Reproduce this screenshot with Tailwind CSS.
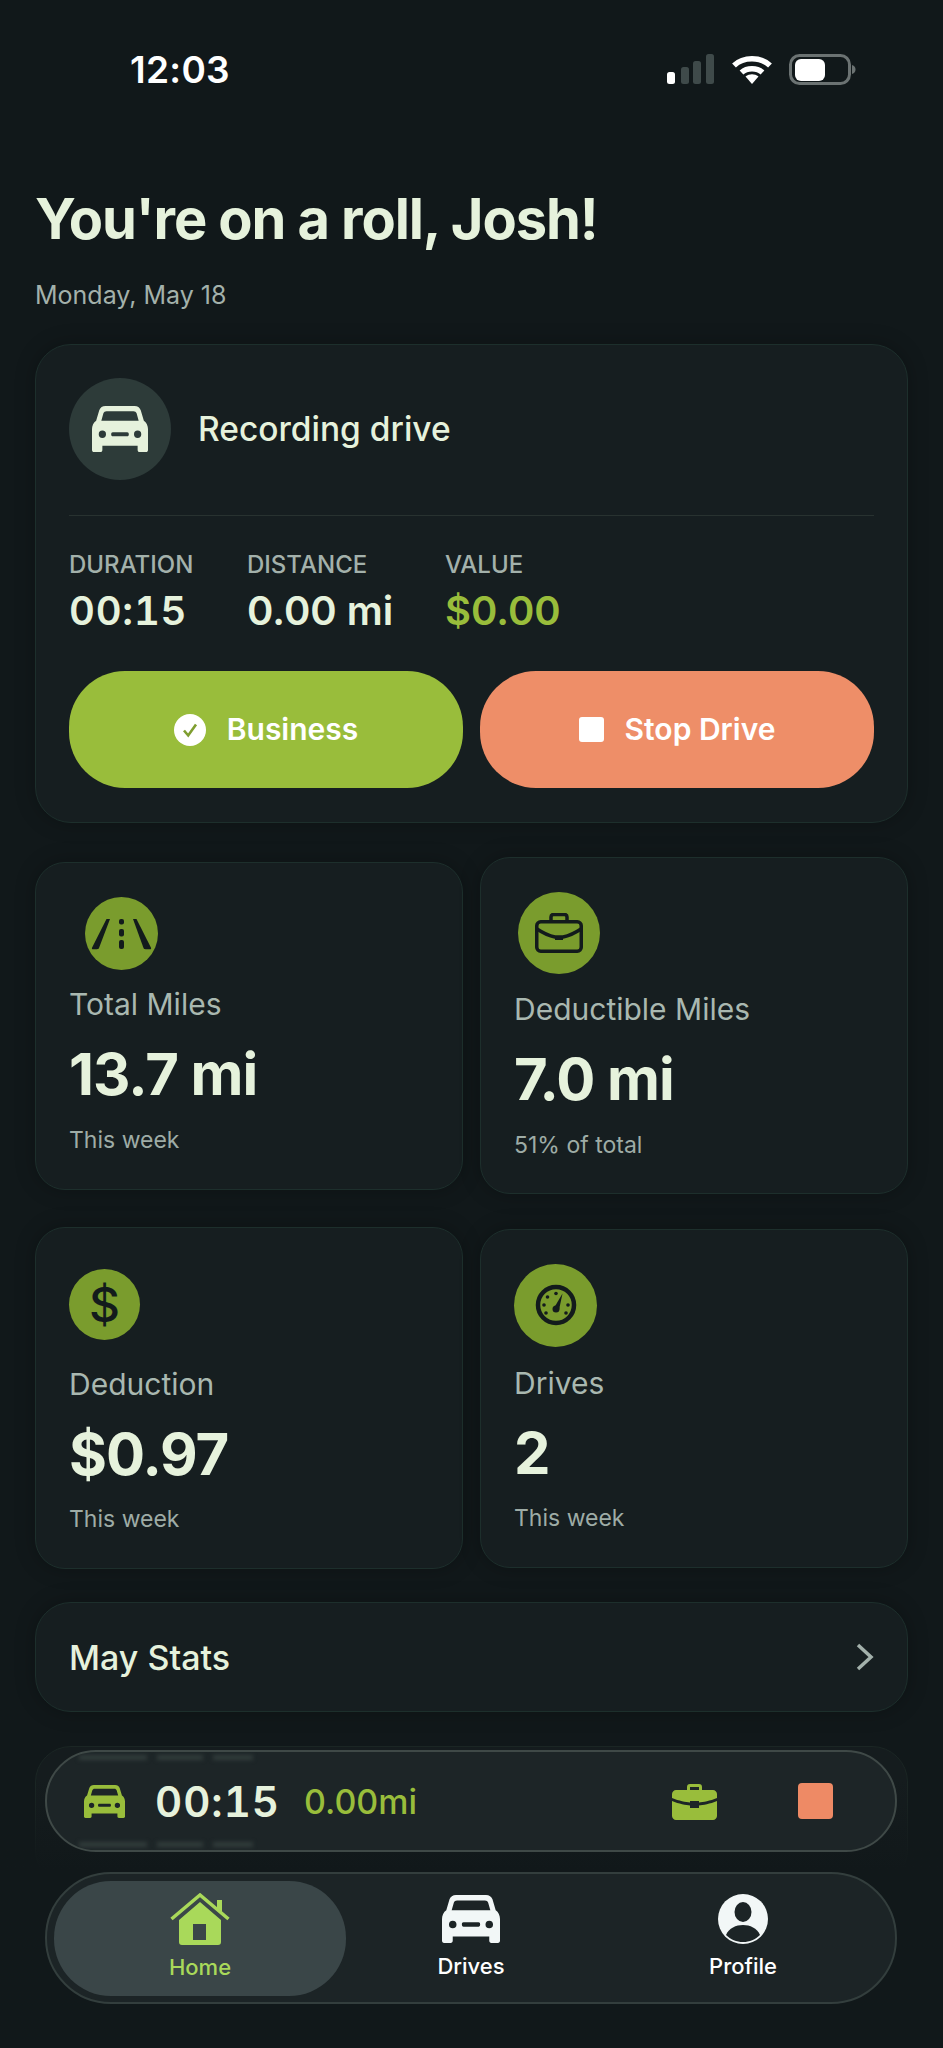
<!DOCTYPE html>
<html lang="en">
<head>
  <meta charset="UTF-8">
  <meta name="viewport" content="width=device-width, initial-scale=1.0">
  <title>Home - Mileage Tracker</title>
  <script src="https://cdn.jsdelivr.net/npm/@tailwindcss/browser@4"></script>
</head>
<body class="bg-[#11181a] font-[Inter,sans-serif] text-[#e6f2dc]">
<div class="relative w-[943px] h-[2048px] overflow-hidden">

  <!-- Status bar -->
  <div class="flex items-center h-[31px] mt-[54px] pl-[130px] pr-[87px] justify-between">
    <span class="text-[37px] leading-none font-semibold text-white tracking-[0.3px]">12:03</span>
    <div class="flex items-center gap-[16px]">
      <svg width="48" height="31" viewBox="0 0 48 31"><rect x="0" y="18" width="8" height="12" rx="2.5" fill="#fff"/><rect x="14" y="13" width="8" height="17" rx="2.5" fill="#3f4a4a"/><rect x="26" y="7" width="8" height="23" rx="2.5" fill="#3f4a4a"/><rect x="39" y="0" width="8" height="30" rx="2.5" fill="#3f4a4a"/></svg>
      <svg width="42" height="31" viewBox="0 0 42 31"><path d="M3 11.5C12.5 2.5 29.5 2.5 39 11.5" fill="none" stroke="#fff" stroke-width="5.5"/><path d="M10.5 18.5C16 13.5 26 13.5 31.5 18.5" fill="none" stroke="#fff" stroke-width="5.5"/><path d="M14.5 22.5 21 30l6.5-7.5C23.5 19.5 18.5 19.5 14.5 22.5Z" fill="#fff"/></svg>
      <svg width="67" height="31" viewBox="0 0 67 31"><rect x="1.5" y="1.5" width="59" height="28" rx="9" fill="none" stroke="#6b7272" stroke-width="3"/><rect x="6" y="5" width="30" height="22" rx="6" fill="#fff"/><path d="M63 11c2.5.5 3.5 2.5 3.5 4.5S65.500 19.500 63 20Z" fill="#6b7272"/></svg>
    </div>
  </div>

  <main class="px-[35px]">
    <h1 class="mt-[100px] text-[56px] leading-[68px] font-bold tracking-[-1.1px]">You're on a roll, Josh!</h1>
    <p class="mt-[27px] text-[25px] leading-[30px] text-[#a3b1ab]">Monday, May 18</p>

    <div class="flex flex-col gap-[34px] mt-[34px]">
      <!-- Active drive -->
      <section class="h-[479px] rounded-[36px] border border-[#1d2f2c] bg-[#161e20] shadow-[0_0_20px_rgba(0,0,0,0.25)] px-[33px] pt-[33px]">
        <div class="flex items-center gap-[27px] pb-[35px] border-b border-[#283230]">
          <div class="flex items-center justify-center w-[102px] h-[102px] rounded-full bg-[#2d3b39]">
            <svg class="w-[56px] h-[46px]" viewBox="0 0 54 44" preserveAspectRatio="none" fill="#e6f2dc"><path fill-rule="evenodd" d="M13 0H41c3 0 5 1.500 6 4L50 14c2.500 1.500 4 5 4 8V42c0 1-.7 2-2 2H46c-1.300 0-2-1-2-2V38H10V42c0 1-.7 2-2 2H2c-1.300 0-2-1-2-2V22c0-3 1.500-6.500 4-8L7 4C8 1.500 10 0 13 0ZM14 5c-1.500 0-2.500.8-3 2L9 14H45L43 7c-.5-1.200-1.500-2-3-2ZM10 23.500a3.500 3.500 0 1 0 0 7 3.500 3.500 0 0 0 0-7ZM44 23.500a3.500 3.500 0 1 0 0 7 3.500 3.500 0 0 0 0-7ZM20 25c-1 0-1.500.7-1.500 2s.5 2 1.500 2H34c1 0 1.500-.7 1.500-2s-.5-2-1.500-2Z"/></svg>
          </div>
          <span class="text-[33.5px] font-medium">Recording drive</span>
        </div>
        <div class="flex mt-[34px]">
          <div class="w-[178px]">
            <div class="text-[24px] leading-[30px] font-medium text-[#a3b1ab]">DURATION</div>
            <div class="text-[40px] leading-[48px] mt-[7px] font-semibold tabular-nums tracking-[0.8px]">00:15</div>
          </div>
          <div class="w-[198px]">
            <div class="text-[24px] leading-[30px] font-medium text-[#a3b1ab]">DISTANCE</div>
            <div class="text-[40px] leading-[48px] mt-[7px] font-semibold">0.00 mi</div>
          </div>
          <div>
            <div class="text-[24px] leading-[30px] font-medium text-[#a3b1ab]">VALUE</div>
            <div class="text-[40px] leading-[48px] mt-[7px] font-semibold text-[#99bd3b]">$0.00</div>
          </div>
        </div>
        <div class="flex gap-[17px] mt-[36px]">
          <div class="flex-1 h-[117px] rounded-[56px] bg-[#99bd3b] flex items-center justify-center gap-[21px] text-[30px] font-semibold text-white">
            <svg class="w-[32px] h-[32px]" viewBox="0 0 32 32"><circle cx="16" cy="16" r="16" fill="#fff"/><path d="M10 16.500l4.200 5L22 10.500" fill="none" stroke="#7f9e30" stroke-width="2.600"/></svg>
            Business
          </div>
          <div class="flex-1 h-[117px] rounded-[56px] bg-[#ee8e68] flex items-center justify-center gap-[21px] text-[30px] font-semibold text-white">
            <span class="w-[25px] h-[25px] rounded-[3px] bg-white"></span>
            Stop Drive
          </div>
        </div>
      </section>

      <!-- Week stats -->
      <div class="grid grid-cols-2 gap-x-[17px] items-center">
        <section class="h-[328px] rounded-[30px] border border-[#1d2f2c] bg-[#161e20] shadow-[0_0_20px_rgba(0,0,0,0.25)] pl-[33px] pt-[34px]">
          <svg class="ml-[16px] w-[73px] h-[73px]" viewBox="0 0 73 73"><circle cx="36.500" cy="36.500" r="36.500" fill="#7a9c2d"/><g fill="#131b1c"><path d="M21.500 22h3.500L14 51c-.3.8-1 1.200-2 1.200H8c-1 0-1.300-.7-1-1.500Z"/><path d="M48 22h3.500L66 50.700c.3.8 0 1.500-1 1.500h-4.500c-1 0-1.700-.4-2-1.200Z"/><rect x="34" y="22" width="5" height="5.500" rx="2"/><rect x="34" y="32" width="5" height="7.500" rx="2"/><rect x="34" y="43" width="5" height="9" rx="2"/></g></svg>
          <div class="mt-[16px] text-[30px] leading-[36px] text-[#a9b8b0]">Total Miles</div>
          <div class="mt-[18px] text-[58px] leading-[68px] font-bold tracking-[-1px]">13.7 mi</div>
          <div class="mt-[18px] text-[23px] leading-[28px] text-[#9eaca6]">This week</div>
        </section>
        <section class="h-[337px] rounded-[30px] border border-[#1d2f2c] bg-[#161e20] shadow-[0_0_20px_rgba(0,0,0,0.25)] pl-[33px] pt-[34px]">
          <div class="ml-[4px] flex items-center justify-center w-[82px] h-[82px] rounded-full bg-[#7a9c2d]">
            <svg class="w-[48px] h-[40px]" viewBox="0 0 48 40" fill="none" stroke="#131b1c" stroke-width="3.500"><rect x="1.750" y="8.750" width="44.500" height="29.500" rx="4"/><path d="M16 8V4c0-1.700 1-2.500 2.500-2.500h11C31 1.500 32 2.300 32 4V8"/><path d="M2 16c6 4 13 7 18 8h8c5-1 12-4 18-8"/><rect x="20" y="23" width="8" height="4" fill="#131b1c" stroke="none"/></svg>
          </div>
          <div class="mt-[17px] text-[30px] leading-[36px] text-[#a9b8b0]">Deductible Miles</div>
          <div class="mt-[18px] text-[58px] leading-[68px] font-bold tracking-[-1px]">7.0 mi</div>
          <div class="mt-[18px] text-[23px] leading-[28px] text-[#9eaca6]">51% of total</div>
        </section>
      </div>

      <div class="grid grid-cols-2 gap-x-[17px] items-center -mt-[1px]">
        <section class="h-[342px] rounded-[30px] border border-[#1d2f2c] bg-[#161e20] shadow-[0_0_20px_rgba(0,0,0,0.25)] pl-[33px] pt-[41px]">
          <div class="flex items-center justify-center w-[71px] h-[71px] rounded-full bg-[#7a9c2d] text-[48px] font-medium leading-none text-[#131b1c]">$</div>
          <div class="mt-[26px] text-[30px] leading-[36px] text-[#a9b8b0]">Deduction</div>
          <div class="mt-[18px] text-[58px] leading-[68px] font-bold tracking-[-1px]">$0.97</div>
          <div class="mt-[17px] text-[23px] leading-[28px] text-[#9eaca6]">This week</div>
        </section>
        <section class="h-[339px] rounded-[30px] border border-[#1d2f2c] bg-[#161e20] shadow-[0_0_20px_rgba(0,0,0,0.25)] pl-[33px] pt-[34px]">
          <div class="flex items-center justify-center w-[83px] h-[83px] rounded-full bg-[#7a9c2d]">
            <svg class="w-[42px] h-[42px]" viewBox="0 0 42 42"><circle cx="21" cy="21" r="18" fill="none" stroke="#131b1c" stroke-width="4.500"/><path d="M19 24 27.500 9.500 24 26Z" fill="#131b1c"/><circle cx="21" cy="25" r="3.500" fill="#131b1c"/><g fill="#131b1c"><circle cx="21" cy="9.500" r="1.800"/><circle cx="12.500" cy="13" r="1.800"/><circle cx="9" cy="21" r="1.800"/><circle cx="11" cy="29" r="1.800"/><circle cx="31" cy="29" r="1.800"/><circle cx="33" cy="21" r="1.800"/></g></svg>
          </div>
          <div class="mt-[18px] text-[30px] leading-[36px] text-[#a9b8b0]">Drives</div>
          <div class="mt-[18px] text-[58px] leading-[68px] font-bold">2</div>
          <div class="mt-[17px] text-[23px] leading-[28px] text-[#9eaca6]">This week</div>
        </section>
      </div>

      <!-- Monthly stats link -->
      <section class="-mt-[1px] h-[110px] rounded-[36px] border border-[#1d2f2c] bg-[#161e20] shadow-[0_0_20px_rgba(0,0,0,0.25)] px-[33px] flex items-center justify-between">
        <span class="text-[34px] font-medium">May Stats</span>
        <svg class="w-[18px] h-[28px]" viewBox="0 0 18 28" fill="none" stroke="#a3b1ab" stroke-width="3.500"><path d="M2 2l13 12L2 26"/></svg>
      </section>

      <!-- Card scrolled under the floating bars -->
      <section class="h-[140px] rounded-[36px] border border-[#1b2624] bg-[#151c1e]"></section>
    </div>
  </main>

  <!-- Fade behind the tab bar -->
  <div class="absolute left-0 top-[1780px] w-full h-[90px] bg-gradient-to-b from-[#11181a]/0 to-[#11181a]"></div>
  <div class="absolute left-0 top-[1870px] w-full h-[178px] bg-[#11181a]"></div>

  <!-- Floating recorder and tab bar -->
  <div class="absolute left-[45px] top-[1750px] w-[852px] flex flex-col gap-[20px]">
    <div class="relative overflow-hidden h-[102px] rounded-[51px] border-2 border-[#3f4947] bg-[#1d2527] flex items-center pl-[37px] pr-[62px]">
      <!-- smeared reflection of the card underneath -->
      <div class="absolute left-[32px] top-[3px] flex gap-[10px] blur-[2px]">
        <span class="w-[68px] h-[5px] bg-[#323d3c]"></span><span class="w-[46px] h-[5px] bg-[#323d3c]"></span><span class="w-[40px] h-[5px] bg-[#323d3c]"></span>
      </div>
      <div class="absolute left-[32px] bottom-[3px] flex gap-[10px] blur-[2px]">
        <span class="w-[68px] h-[5px] bg-[#323d3c]"></span><span class="w-[46px] h-[5px] bg-[#323d3c]"></span><span class="w-[40px] h-[5px] bg-[#323d3c]"></span>
      </div>
      <svg class="w-[41px] h-[33px]" viewBox="0 0 54 44" preserveAspectRatio="none" fill="#99bd3b"><path fill-rule="evenodd" d="M13 0H41c3 0 5 1.500 6 4L50 14c2.500 1.500 4 5 4 8V42c0 1-.7 2-2 2H46c-1.300 0-2-1-2-2V38H10V42c0 1-.7 2-2 2H2c-1.300 0-2-1-2-2V22c0-3 1.500-6.500 4-8L7 4C8 1.500 10 0 13 0ZM14 5c-1.500 0-2.500.8-3 2L9 14H45L43 7c-.5-1.200-1.500-2-3-2ZM10 23.500a3.500 3.500 0 1 0 0 7 3.500 3.500 0 0 0 0-7ZM44 23.500a3.500 3.500 0 1 0 0 7 3.500 3.500 0 0 0 0-7ZM20 25c-1 0-1.500.7-1.500 2s.5 2 1.500 2H34c1 0 1.500-.7 1.500-2s-.5-2-1.500-2Z"/></svg>
      <span class="ml-[30px] text-[42px] font-semibold tabular-nums tracking-[1px]">00:15</span>
      <span class="ml-[24px] text-[34px] font-medium text-[#99bd3b]">0.00mi</span>
      <svg class="ml-auto w-[45px] h-[37px]" viewBox="0 0 45 37"><path d="M15 8V4c0-2 1-3 3-3h9c2 0 3 1 3 3v4h-3V4h-9v4Z" fill="#99bd3b"/><path d="M4 7h37c2 0 4 2 4 4v4c-7 3-14 4-18 4.500V18h-9v1.500C14 19 7 18 0 15v-4c0-2 2-4 4-4Z" fill="#99bd3b"/><path d="M0 18c7 3 14 4 18 4.500V25h9v-2.500c4-.5 11-1.500 18-4.500v15c0 2-2 4-4 4H4c-2 0-4-2-4-4Z" fill="#99bd3b"/></svg>
      <span class="ml-[81px] w-[35px] h-[36px] rounded-[4px] bg-[#ee8a65]"></span>
    </div>
    <nav class="h-[132px] rounded-[66px] border-2 border-[#333e3d] bg-[#1c2426] flex items-center pl-[7px] text-[22px] font-medium">
      <div class="w-[292px] h-[115px] rounded-[57px] bg-[#3a4648] flex flex-col items-center justify-center gap-[6px] text-[#a9d95a]">
        <svg class="w-[60px] h-[52px]" viewBox="0 0 60 52" fill="none"><path d="M1.500 26 30 2l28.500 24" stroke="#a9d95a" stroke-width="3.500"/><path d="M47 7h5v12l-5-4Z" fill="#a9d95a"/><path fill-rule="evenodd" d="M30 9 51 27V49c0 2-1 3-3 3H12c-2 0-3-1-3-3V27ZM23 31V47H36V31Z" fill="#a9d95a"/></svg>
        <span>Home</span>
      </div>
      <div class="w-[250px] flex flex-col items-center gap-[6px] text-white">
        <svg class="w-[58px] h-[50px] py-[1px]" viewBox="0 0 54 44" preserveAspectRatio="none" fill="#f2f7f7"><path fill-rule="evenodd" d="M13 0H41c3 0 5 1.500 6 4L50 14c2.500 1.500 4 5 4 8V42c0 1-.7 2-2 2H46c-1.300 0-2-1-2-2V38H10V42c0 1-.7 2-2 2H2c-1.300 0-2-1-2-2V22c0-3 1.500-6.500 4-8L7 4C8 1.500 10 0 13 0ZM14 5c-1.500 0-2.500.8-3 2L9 14H45L43 7c-.5-1.200-1.500-2-3-2ZM10 23.500a3.500 3.500 0 1 0 0 7 3.500 3.500 0 0 0 0-7ZM44 23.500a3.500 3.500 0 1 0 0 7 3.500 3.500 0 0 0 0-7ZM20 25c-1 0-1.500.7-1.500 2s.5 2 1.500 2H34c1 0 1.500-.7 1.500-2s-.5-2-1.500-2Z"/></svg>
        <span>Drives</span>
      </div>
      <div class="w-[294px] flex flex-col items-center gap-[6px] text-white">
        <svg class="w-[50px] h-[50px]" viewBox="0 0 50 50"><circle cx="25" cy="25" r="25" fill="#f2f7f7"/><ellipse cx="25" cy="18" rx="8.500" ry="10" fill="#1c2426"/><path d="M8 41c3-7 10-10 17-10s14 3 17 10c-4.500 4.500-10.500 7-17 7S12.500 45.500 8 41Z" fill="#1c2426"/></svg>
        <span>Profile</span>
      </div>
    </nav>
  </div>
</div>
</body>
</html>
